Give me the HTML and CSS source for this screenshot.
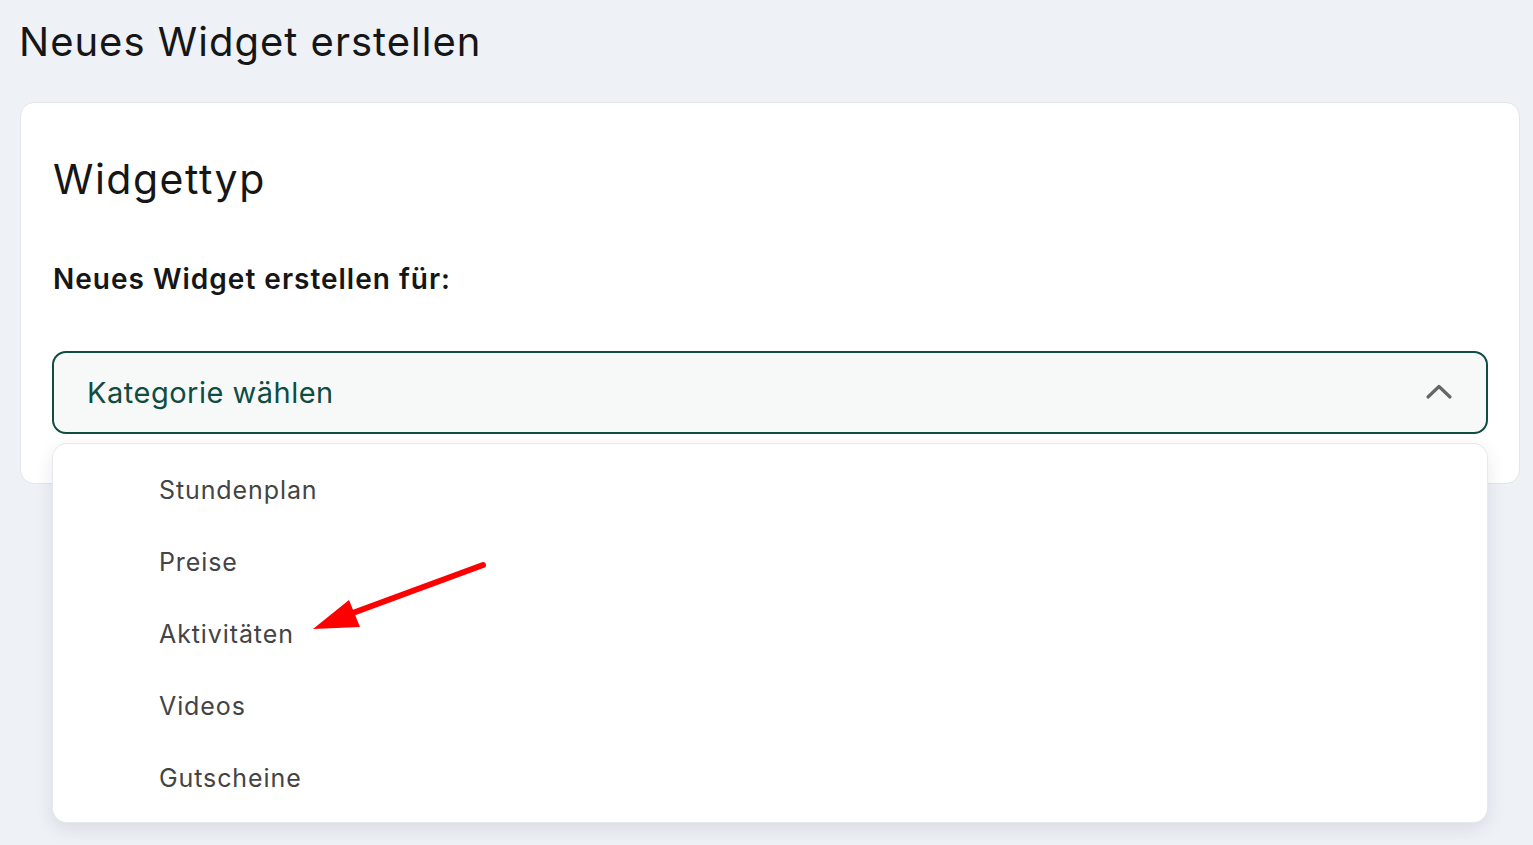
FILE: index.html
```html
<!DOCTYPE html>
<html lang="de">
<head>
<meta charset="utf-8">
<title>Neues Widget erstellen</title>
<link rel="stylesheet" href="styles.css">
</head>
<body>
<main class="page">
  <h1 class="page-title">Neues Widget erstellen</h1>
  <section class="card">
    <h2 class="card-title">Widgettyp</h2>
    <p class="field-label">Neues Widget erstellen für:</p>
    <div class="select-wrap">
      <div class="select">
        <span class="select-text">Kategorie wählen</span>
        <svg class="chevron" width="28" height="18" viewBox="0 0 28 18"><path d="M3 15 L14 4.5 L25 15" fill="none" stroke="#666" stroke-width="3.2" stroke-linecap="round" stroke-linejoin="round"/></svg>
      </div>
      <ul class="menu">
        <li class="menu-item">Stundenplan</li>
        <li class="menu-item">Preise</li>
        <li class="menu-item">Aktivitäten</li>
        <li class="menu-item">Videos</li>
        <li class="menu-item">Gutscheine</li>
      </ul>
    </div>
  </section>
  <svg class="annotation" width="1533" height="845" viewBox="0 0 1533 845">
    <line x1="483" y1="565" x2="350" y2="614" stroke="#ff0000" stroke-width="6" stroke-linecap="round"/>
    <polygon points="313,629 349,600 360,627" fill="#ff0000"/>
  </svg>
</main>
</body>
</html>
```

FILE: styles.css
```css
* { box-sizing: border-box; }
html, body { margin: 0; padding: 0; }
body {
  background: #eef1f6;
  font-family: Inter, "Noto Sans", sans-serif;
  width: 1533px;
  height: 845px;
  overflow: hidden;
}
.page {
  padding: 14px 13px 0 19px;
}
.page-title {
  margin: 0;
  font-size: 40px;
  font-weight: 400;
  line-height: 56px;
  color: #161616;
  letter-spacing: 1px;
}
.card {
  margin-top: 32px;
  margin-left: 1px;
  width: 1500px;
  height: 382px;
  background: #fff;
  border: 1px solid #e2e5ea;
  border-radius: 14px;
  padding: 46px 32px 0 32px;
}
.card-title {
  margin: 0;
  font-size: 41px;
  font-weight: 400;
  line-height: 60px;
  color: #161616;
  letter-spacing: 1.5px;
}
.field-label {
  margin: 53px 0 0 0;
  font-size: 28px;
  font-weight: 600;
  line-height: 34px;
  color: #161616;
  letter-spacing: 1px;
}
.select-wrap {
  margin-top: 55px;
  position: relative;
}
.select {
  height: 83px;
  border: 2px solid #0f4c42;
  border-radius: 14px;
  background: #f7f9f9;
  display: flex;
  align-items: center;
  justify-content: space-between;
  padding: 0 33px 0 33px;
  margin-left: -1px;
  margin-right: -1px;
}
.select-text {
  font-size: 29px;
  color: #0f4c42;
  letter-spacing: 0.5px;
}
.chevron { display: block; margin-top: -4px; }
.menu {
  position: absolute;
  top: 93px;
  left: 0;
  right: 0;
  margin: 0;
  padding: 10px 0 8px 0;
  list-style: none;
  background: #fff;
  border-radius: 14px;
  box-shadow: 0 0 0 1px #e6e8ec, 0 6px 18px rgba(40, 50, 70, 0.12);
}
.menu-item {
  height: 72px;
  display: flex;
  align-items: center;
  padding-left: 106px;
  font-size: 25px;
  color: #444;
  letter-spacing: 0.9px;
}
.annotation {
  position: absolute;
  left: 0;
  top: 0;
  pointer-events: none;
}
```
